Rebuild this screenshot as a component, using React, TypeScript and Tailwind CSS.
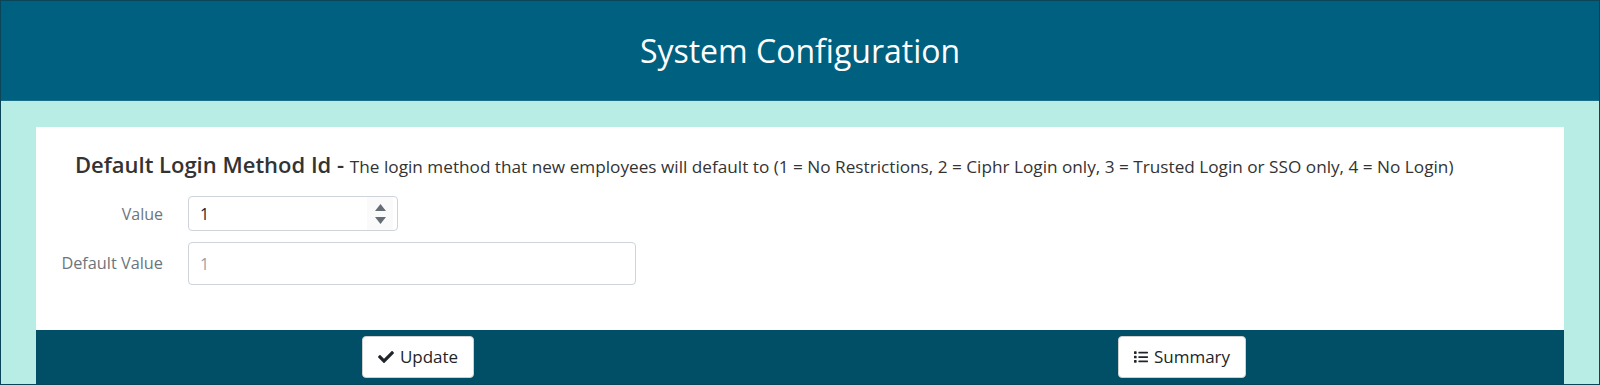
import { FaCheck, FaList } from "react-icons/fa"

const font = { fontFamily: '"Open Sans", "Noto Sans", sans-serif' }

function NumberSpinner() {
  return (
    <div className="flex h-full w-[26px] flex-col items-center justify-center gap-[6px] bg-[#fafafa]">
      <svg width="11" height="7" viewBox="0 0 11 7" aria-hidden="true">
        <path d="M5.5 0 L11 7 L0 7 Z" fill="#666d75" />
      </svg>
      <svg width="11" height="7" viewBox="0 0 11 7" aria-hidden="true">
        <path d="M0 0 L11 0 L5.5 7 Z" fill="#666d75" />
      </svg>
    </div>
  )
}

export default function App() {
  return (
    <div
      className="flex h-[385px] w-full flex-col overflow-hidden border border-[#0b4558] bg-[#b8ede6]"
      style={font}
    >
      <header className="flex h-[100px] shrink-0 items-center justify-center border-b border-[#1a6f88] bg-[#00607f]">
        <h1 className="text-[32px] font-normal text-white">System Configuration</h1>
      </header>

      <main className="flex flex-1 flex-col px-[35px] pt-[26px]">
        <section className="h-[203px] bg-white pl-[39px] pt-[22px]">
          <h2 className="text-[22px] leading-[30px] font-semibold text-[#333]">
            Default Login Method Id -{" "}
            <span className="text-[17.2px] font-normal">
              The login method that new employees will default to (1 = No Restrictions, 2 = Ciphr
              Login only, 3 = Trusted Login or SSO only, 4 = No Login)
            </span>
          </h2>

          <div className="mt-[14px] flex flex-col gap-[11px]">
            <div className="flex items-center gap-[25px]">
              <label className="w-[88px] text-right text-[16px] text-[#6c757d]">Value</label>
              <div className="flex h-[35px] w-[210px] items-center rounded-[4px] border border-[#ced4da] pl-[11px] pr-[4px]">
                <span className="flex-1 text-[16px] text-[#212529]">1</span>
                <NumberSpinner />
              </div>
            </div>
            <div className="flex items-center gap-[25px]">
              <label className="-ml-[37px] w-[125px] text-right text-[16.3px] text-[#6c757d]">
                Default Value
              </label>
              <div className="flex h-[43px] w-[448px] items-center rounded-[4px] border border-[#ced4da] pl-[11px]">
                <span className="text-[16px] text-[#9aa0a6]">1</span>
              </div>
            </div>
          </div>
        </section>

        <footer className="grid flex-1 grid-cols-2 items-start bg-[#004f66] pt-[6px]">
          <div className="flex justify-center">
            <button className="flex h-[42px] items-center gap-[6px] rounded-[4px] border border-[#d0d0d0] bg-white px-[15px] text-[17px] text-[#212529]">
              <FaCheck className="h-[16px] w-[16px]" />
              Update
            </button>
          </div>
          <div className="flex justify-center">
            <button className="flex h-[42px] items-center gap-[6px] rounded-[4px] border border-[#d0d0d0] bg-white px-[15px] text-[17px] text-[#212529]">
              <FaList className="h-[14px] w-[14px]" />
              Summary
            </button>
          </div>
        </footer>
      </main>
    </div>
  )
}
